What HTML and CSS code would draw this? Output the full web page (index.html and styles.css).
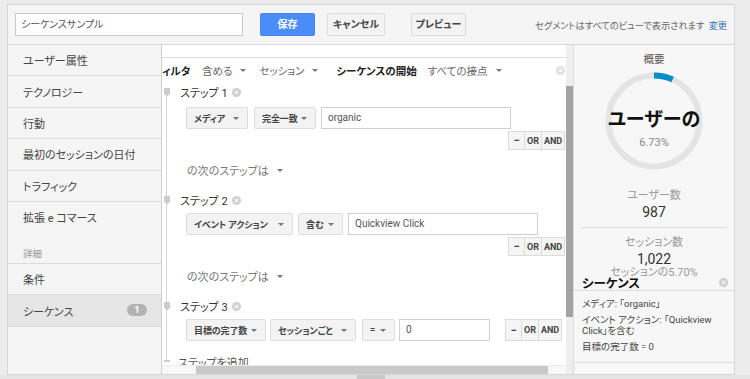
FILE: index.html
```html
<!DOCTYPE html>
<html lang="ja">
<head>
<meta charset="utf-8">
<title>シーケンスサンプル</title>
<link rel="stylesheet" href="styles.css">
</head>
<body>
<div class="frame">
  <div class="topbar">
    <div class="name-input">シーケンスサンプル</div>
    <button class="btn btn-primary save">保存</button>
    <button class="btn cancel">キャンセル</button>
    <button class="btn preview">プレビュー</button>
    <div class="note">セグメントはすべてのビューで表示されます <span class="link">変更</span></div>
  </div>
  <div class="body">
    <nav class="sidebar">
      <div class="side-item">ユーザー属性</div>
      <div class="side-item">テクノロジー</div>
      <div class="side-item">行動</div>
      <div class="side-item">最初のセッションの日付</div>
      <div class="side-item">トラフィック</div>
      <div class="side-item no-border">拡張 e コマース</div>
      <div class="side-label">詳細</div>
      <div class="side-item">条件</div>
      <div class="side-item selected">シーケンス<span class="badge">1</span></div>
    </nav>
    <main class="main">
      <div class="main-scroll">
        <div class="timeline"></div>
        <div class="top-strip"></div>
        <div class="filter-row">
          <span class="f-bold f-first">ィルタ</span>
          <span class="f-drop f-include">含める<i class="caret"></i></span>
          <span class="f-drop f-session">セッション<i class="caret"></i></span>
          <span class="f-bold f-start">シーケンスの開始</span>
          <span class="f-drop f-touch">すべての接点<i class="caret"></i></span>
          <span class="x-icon f-x"></span>
        </div>

        <div class="step-head step-first"><span class="marker"></span><span class="step-title">ステップ 1</span><span class="x-icon"></span></div>
        <div class="cond-row cond-first">
          <span class="sel w-media">メディア<i class="caret"></i></span>
          <span class="sel w-exact">完全一致<i class="caret"></i></span>
          <span class="txt w-organic">organic</span>
        </div>
        <div class="ops-row"><span class="op op-minus">−</span><span class="op op-or">OR</span><span class="op op-and">AND</span></div>

        <div class="next-step">の次のステップは<i class="caret"></i></div>

        <div class="step-head"><span class="marker"></span><span class="step-title">ステップ 2</span><span class="x-icon"></span></div>
        <div class="cond-row">
          <span class="sel w-event">イベント アクション<i class="caret"></i></span>
          <span class="sel w-contains">含む<i class="caret"></i></span>
          <span class="txt w-quick">Quickview Click</span>
        </div>
        <div class="ops-row"><span class="op op-minus">−</span><span class="op op-or">OR</span><span class="op op-and">AND</span></div>

        <div class="next-step">の次のステップは<i class="caret"></i></div>

        <div class="step-head"><span class="marker"></span><span class="step-title">ステップ 3</span><span class="x-icon"></span></div>
        <div class="cond-row">
          <span class="sel w-goal">目標の完了数<i class="caret"></i></span>
          <span class="sel w-per">セッションごと<i class="caret"></i></span>
          <span class="sel w-eq">=<i class="caret"></i></span>
          <span class="txt w-zero">0</span>
          <span class="ops-inline"><span class="op op-minus">−</span><span class="op op-or">OR</span><span class="op op-and">AND</span></span>
        </div>

        <div class="add-step"><span class="add-marker"></span>ステップを追加</div>
      </div>
      <div class="hscroll"><div class="hthumb"></div></div>
    </main>
    <div class="vscroll"><div class="vthumb"></div></div>
    <aside class="summary">
      <div class="sum-title">概要</div>
      <div class="donut">
        <svg class="donut-svg" width="98" height="98" viewBox="0 0 98 98">
          <circle cx="49" cy="49" r="45.5" fill="none" stroke="#e4e4e4" stroke-width="6"></circle>
          <circle cx="49" cy="49" r="45.5" fill="none" stroke="#058dc7" stroke-width="6" stroke-dasharray="19.2 300" transform="rotate(-90 49 49)"></circle>
        </svg>
        <div class="donut-text">
          <div class="donut-main">ユーザーの</div>
          <div class="donut-pct">6.73%</div>
        </div>
      </div>
      <div class="stat-label users-label">ユーザー数</div>
      <div class="stat-value">987</div>
      <div class="sum-sep"></div>
      <div class="stat-label">セッション数</div>
      <div class="stat-value">1,022</div>
      <div class="stat-label stat-pct">セッションの5.70%</div>
      <div class="seq-head"><span>シーケンス</span><span class="x-icon seq-x"></span></div>
      <ul class="seq-list">
        <li>メディア: 「organic」</li>
        <li>イベント アクション: 「Quickview Click」を含む</li>
        <li>目標の完了数 = 0</li>
      </ul>
    </aside>
  </div>
</div>
<div class="pagebar"><div class="pagethumb"></div></div>
</body>
</html>
```

FILE: styles.css
```css
html, body {
  margin: 0;
  padding: 0;
}
body {
  width: 750px;
  height: 379px;
  overflow: hidden;
  background: #ececec;
  font-family: Roboto, "Liberation Sans", "Noto Sans CJK JP", sans-serif;
  font-feature-settings: "palt";
  color: #444;
}
.frame {
  margin: 4px 0 0 7px;
  width: 728px;
  height: 371px;
  box-sizing: border-box;
  border: 1px solid #d6d6d6;
  background: #f5f5f5;
  display: flex;
  flex-direction: column;
}

/* top bar */
.topbar {
  height: 39px;
  flex: none;
  border-bottom: 1px solid #d9d9d9;
  display: flex;
  align-items: center;
  padding: 0 7px;
}
.name-input {
  width: 228px;
  height: 23px;
  box-sizing: border-box;
  border: 1px solid #c9c9c9;
  background: #fff;
  font-size: 10px;
  line-height: 21px;
  padding-left: 5px;
  color: #555;
}
.btn {
  height: 23px;
  box-sizing: border-box;
  border: 1px solid #dadada;
  border-radius: 2px;
  background: #f3f3f3;
  font-family: inherit;
  font-feature-settings: "palt";
  font-size: 10px;
  font-weight: bold;
  color: #444;
  padding: 0;
  line-height: 21px;
}
.btn-primary {
  background: #4b8df8;
  border-color: #4685ee;
  color: #fff;
}
.save { width: 55px; margin-left: 17px; }
.cancel { width: 58px; margin-left: 12px; }
.preview { width: 55px; margin-left: 26px; }
.note {
  margin-left: auto;
  font-size: 9.2px;
  color: #666;
}
.link { color: #2a6ebb; margin-left: 2px; }

/* body */
.body {
  flex: 1;
  display: flex;
  min-height: 0;
}
.sidebar {
  width: 153px;
  flex: none;
  border-right: 1px solid #d0d0d0;
  background: #f5f5f5;
  display: flex;
  flex-direction: column;
}
.side-item {
  height: 31.4px;
  box-sizing: border-box;
  border-bottom: 1px solid #dcdcdc;
  padding-left: 15px;
  display: flex;
  align-items: center;
  font-size: 11px;
  color: #444;
  position: relative;
}
.side-item.no-border { border-bottom-color: transparent; }
.side-label {
  height: 30.6px;
  box-sizing: border-box;
  border-bottom: 1px solid #dcdcdc;
  padding: 0 0 3px 15px;
  display: flex;
  align-items: flex-end;
  font-size: 9.5px;
  color: #999;
}
.side-item.selected {
  background: #e6e6e6;
}
.badge {
  position: absolute;
  left: 119px;
  top: 9px;
  width: 20px;
  height: 12px;
  border-radius: 6px;
  background: #b3b3b3;
  color: #fff;
  font-size: 9.5px;
  font-weight: bold;
  line-height: 12px;
  text-align: center;
}

/* main */
.main {
  width: 404px;
  flex: none;
  background: #fff;
  display: flex;
  flex-direction: column;
  overflow: hidden;
}
.main-scroll {
  flex: 1;
  min-height: 0;
  overflow: hidden;
  position: relative;
}
.timeline {
  position: absolute;
  left: 4px;
  top: 44px;
  width: 1px;
  height: 272px;
  background: #d4d4d4;
}
.top-strip {
  height: 12px;
  border-bottom: 1px solid #dcdcdc;
}
.filter-row {
  height: 24px;
  display: flex;
  align-items: center;
  font-size: 10.5px;
  color: #666;
  white-space: nowrap;
}
.f-bold { font-weight: bold; color: #222; }
.f-drop { display: inline-flex; align-items: center; }
.f-first { width: 28px; }
.f-include { margin-left: 12px; }
.f-session { margin-left: 13px; }
.f-start { margin-left: 18px; }
.f-touch { margin-left: 11px; }
.caret {
  display: inline-block;
  width: 0;
  height: 0;
  border-left: 3px solid transparent;
  border-right: 3px solid transparent;
  border-top: 3.5px solid #777;
  margin-left: 8px;
}
.x-icon {
  display: inline-block;
  width: 9px;
  height: 9px;
  border-radius: 50%;
  background: #cfcfcf;
  position: relative;
  margin-left: 4px;
}
.x-icon::before, .x-icon::after {
  content: "";
  position: absolute;
  left: 2px;
  top: 4px;
  width: 5px;
  height: 1px;
  background: #fff;
  transform: rotate(45deg);
}
.x-icon::after { transform: rotate(-45deg); }
.filter-row .f-x { margin-left: 54px; background: #e0e0e0; }

.step-head {
  height: 20px;
  display: flex;
  align-items: center;
  margin-top: 10px;
  font-size: 11px;
  color: #333;
  position: relative;
}
.step-first { margin-top: 0; }
.marker {
  width: 6px;
  height: 9px;
  margin-left: 2px;
  background: #cbcbcb;
  clip-path: polygon(0 0, 100% 0, 100% 70%, 50% 100%, 0 70%);
}
.step-title { margin-left: 10px; }

.cond-row {
  display: flex;
  align-items: center;
  height: 22px;
  margin-top: 3px;
  padding-left: 24px;
  white-space: nowrap;
}
.cond-first { margin-top: 5px; }
.sel {
  height: 22px;
  box-sizing: border-box;
  border: 1px solid #dedede;
  border-radius: 2px;
  background: #f3f3f3;
  font-size: 9px;
  letter-spacing: -0.1px;
  font-weight: bold;
  color: #444;
  display: inline-flex;
  align-items: center;
  padding-left: 7px;
  margin-right: 5px;
}
.sel .caret { margin-left: auto; margin-right: 8px; }
.txt {
  height: 22px;
  box-sizing: border-box;
  border: 1px solid #d0d0d0;
  background: #fff;
  font-size: 10px;
  color: #555;
  line-height: 20px;
  padding-left: 6px;
}
.w-media { width: 62px; margin-right: 6px; }
.w-exact { width: 62px; }
.w-organic { width: 190px; }
.w-event { width: 107px; }
.w-contains { width: 45px; }
.w-quick { width: 190px; }
.w-goal { width: 80px; margin-right: 4px; }
.w-per { width: 86px; margin-right: 6px; }
.w-eq { width: 33px; margin-right: 4px; }
.w-zero { width: 91px; }

.ops-row {
  display: flex;
  height: 19px;
  margin-top: 2px;
  padding-left: 346px;
}
.ops-inline {
  display: flex;
  height: 22px;
  margin-left: 15px;
}
.op {
  box-sizing: border-box;
  border: 1px solid #dcdcdc;
  background: #f5f5f5;
  font-size: 9px;
  font-weight: bold;
  color: #444;
  display: inline-flex;
  align-items: center;
  justify-content: center;
  flex: none;
}
.op + .op { margin-left: -1px; }
.op-minus { width: 17px; font-size: 11px; }
.op-or { width: 18px; }
.op-and { width: 24px; }

.next-step {
  height: 20px;
  margin-top: 10px;
  padding-left: 25px;
  font-size: 11px;
  color: #777;
  display: flex;
  align-items: center;
}
.add-step {
  height: 20px;
  margin-top: 11px;
  padding-left: 16px;
  font-size: 11px;
  color: #555;
  display: flex;
  align-items: center;
  position: relative;
}
.add-marker {
  position: absolute;
  left: 2px;
  top: 8px;
  width: 6px;
  height: 2px;
  background: #cbcbcb;
}
.hscroll {
  height: 8px;
  flex: none;
  background: #f7f7f7;
  border-top: 1px solid #ececec;
}
.hthumb {
  margin-left: 34px;
  width: 352px;
  height: 8px;
  background: #c9c9c9;
}
.vscroll {
  width: 7px;
  flex: none;
  background: #eeeeee;
}
.vthumb {
  margin-top: 41px;
  height: 231px;
  background: #a3a3a3;
}

/* summary */
.summary {
  width: 161px;
  flex: none;
  box-sizing: border-box;
  border-left: 1px solid #dcdcdc;
  background: #f7f7f7;
  display: flex;
  flex-direction: column;
  align-items: center;
  overflow: hidden;
}
.sum-title {
  margin-top: 8px;
  font-size: 10.5px;
  line-height: 14px;
  color: #555;
}
.donut {
  margin-top: 5px;
  display: grid;
  width: 98px;
  height: 98px;
}
.donut-svg, .donut-text { grid-area: 1 / 1; }
.donut-text {
  display: flex;
  flex-direction: column;
  align-items: center;
  padding-top: 37px;
}
.donut-main {
  font-size: 19px;
  font-weight: bold;
  color: #111;
  line-height: 22px;
  white-space: nowrap;
}
.donut-pct {
  font-size: 11px;
  color: #888;
  line-height: 16px;
  margin-top: 4px;
}
.stat-label {
  font-size: 11px;
  line-height: 16px;
  color: #999;
}
.users-label { margin-top: 18px; }
.stat-value {
  font-size: 14px;
  line-height: 16px;
  color: #333;
}
.stat-pct { margin-top: -2px; }
.sum-sep {
  width: 146px;
  height: 1px;
  background: #dedede;
  margin: 7px 0 7px;
}
.seq-head {
  align-self: stretch;
  margin-top: -3px;
  height: 12px;
  line-height: 12px;
  border-bottom: 1px solid #dcdcdc;
  padding: 0 6px 0 8px;
  display: flex;
  justify-content: space-between;
  font-size: 12.5px;
  font-weight: bold;
  color: #111;
}
.seq-x { margin-top: 0; }
.seq-list {
  align-self: stretch;
  list-style: none;
  margin: 0;
  padding: 2px 10px 9px 8px;
  border-bottom: 1px solid #dcdcdc;
  font-size: 9.5px;
  line-height: 11.5px;
  color: #444;
}
.seq-list li { margin-top: 4.5px; }

.pagebar {
  height: 4px;
  background: #e4e4e4;
  position: relative;
}
.pagethumb {
  margin-left: 357px;
  width: 28px;
  height: 4px;
  background: #c8c8c8;
}
```
